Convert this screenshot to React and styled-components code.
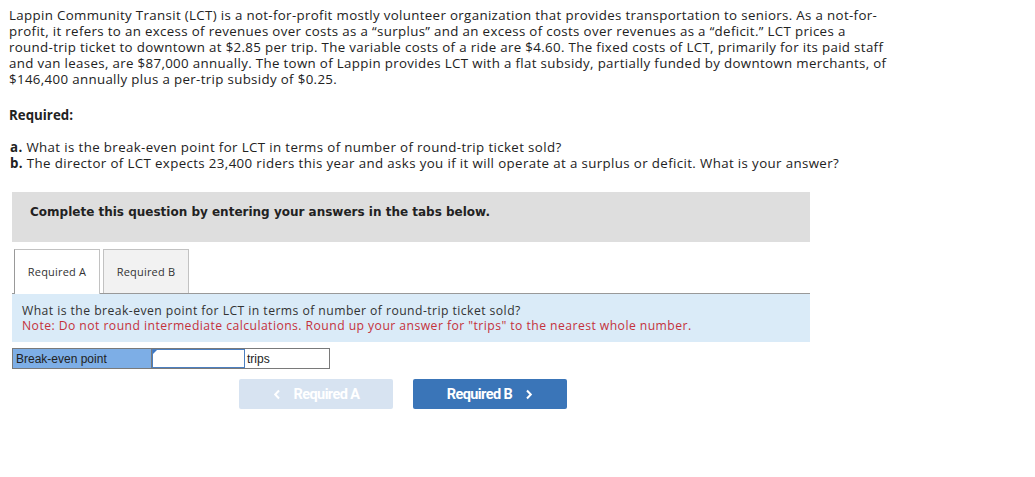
import React from "react";
import styled, { createGlobalStyle } from "styled-components";

const Global = createGlobalStyle`
  html, body { margin: 0; padding: 0; background: #fff; }
  body { font-family: "Open Sans", sans-serif; color: #222; }
`;

const Page = styled.div`
  width: 1035px;
  height: 477px;
  box-sizing: border-box;
  padding: 7px 0 0 9px;
  overflow: hidden;
`;

const Intro = styled.p`
  margin: 0;
  font-family: "Open Sans", sans-serif;
  font-size: 13.3px;
  letter-spacing: 0.34px;
  line-height: 16px;
  color: #222;
`;

const ReqHead = styled.div`
  margin-top: 20px;
  font-family: "Open Sans", sans-serif;
  font-weight: 700;
  font-size: 13.3px;
  line-height: 16px;
  color: #222;
`;

const Parts = styled.div`
  margin-top: 16px;
  padding-left: 1px;
  font-family: "Open Sans", sans-serif;
  font-size: 13.3px;
  letter-spacing: 0.37px;
  line-height: 16px;
  color: #222;
  b { font-weight: 700; }
`;

const Work = styled.div`
  margin: 21px 0 0 3px;
  width: 798px;
`;

const Banner = styled.div`
  height: 50px;
  box-sizing: border-box;
  background: #dedede;
  padding: 13px 0 0 18px;
  font-family: "DejaVu Sans", Verdana, sans-serif;
  font-weight: 700;
  font-size: 12px;
  line-height: 15px;
  color: #222;
`;

const Tabs = styled.div`
  display: flex;
  gap: 3px;
  margin-top: 7px;
  padding-left: 2px;
  height: 44px;
`;

const Tab = styled.div`
  width: 86px;
  box-sizing: border-box;
  border: 1px solid #c2c2c2;
  border-bottom: none;
  background: ${(p) => (p.$active ? "#fff" : "#f2f2f2")};
  display: flex;
  align-items: center;
  justify-content: center;
  font-family: "Open Sans", sans-serif;
  font-size: 11px;
  letter-spacing: 0.2px;
  color: #333;
  padding-bottom: 1px;
  ${(p) => p.$active && "border-left-color: #999; height: 45px; position: relative; z-index: 1;"}
`;

const Panel = styled.div`
  border-top: 1px solid #999;
  background: #daebf8;
  height: 49px;
  box-sizing: border-box;
  padding: 9px 0 0 10px;
  font-family: "Open Sans", sans-serif;
  font-size: 12.2px;
  letter-spacing: 0.44px;
  line-height: 15px;
  color: #333;
`;

const Note = styled.div`
  color: #c4323c;
`;

const Row = styled.div`
  display: flex;
  margin-top: 6px;
  height: 21px;
  width: 318px;
  box-sizing: border-box;
  border: 1px solid #7a7a7a;
  font-family: "Liberation Sans", Arial, sans-serif;
  font-size: 12px;
`;

const Label = styled.div`
  width: 139px;
  background: #7daee6;
  border-right: 1px solid #7a7a7a;
  display: flex;
  align-items: center;
  padding-left: 3px;
  box-sizing: border-box;
  color: #222;
`;

const Input = styled.div`
  width: 93px;
  box-sizing: border-box;
  border: 1px solid #4b7fc0;
  position: relative;
  background: #fff;
  &::before {
    content: "";
    position: absolute;
    left: 0;
    top: 0;
    border-top: 4px solid #3d78c5;
    border-right: 4px solid transparent;
  }
`;

const Unit = styled.div`
  flex: 1;
  display: flex;
  align-items: center;
  padding-left: 2px;
  color: #222;
`;

const Nav = styled.div`
  display: flex;
  gap: 20px;
  margin: 10px 0 0 227px;
`;

const NavBtn = styled.div`
  width: 154px;
  height: 30px;
  border-radius: 2px;
  background: ${(p) => (p.$disabled ? "#d7e3f1" : "#3a75b8")};
  color: #fff;
  display: flex;
  align-items: center;
  justify-content: center;
  gap: 13px;
  font-family: Roboto, sans-serif;
  font-weight: 700;
  font-size: 14.5px;
  letter-spacing: -0.6px;
  svg { display: block; }
`;

const Chevron = ({ dir }) => (
  <svg width="8" height="11" viewBox="0 0 8 11">
    <path
      d={dir === "left" ? "M6 1.5 L2.2 5.5 L6 9.5" : "M2 1.5 L5.8 5.5 L2 9.5"}
      fill="none"
      stroke="#fff"
      strokeWidth="2"
    />
  </svg>
);

export default function App() {
  return (
    <>
      <Global />
      <Page>
        <Intro>
          Lappin Community Transit (LCT) is a not-for-profit mostly volunteer organization that provides transportation to seniors. As a not-for-
          <br />
          profit, it refers to an excess of revenues over costs as a “surplus” and an excess of costs over revenues as a “deficit.” LCT prices a
          <br />
          round-trip ticket to downtown at $2.85 per trip. The variable costs of a ride are $4.60. The fixed costs of LCT, primarily for its paid staff
          <br />
          and van leases, are $87,000 annually. The town of Lappin provides LCT with a flat subsidy, partially funded by downtown merchants, of
          <br />
          $146,400 annually plus a per-trip subsidy of $0.25.
        </Intro>
        <ReqHead>Required:</ReqHead>
        <Parts>
          <div>
            <b>a.</b> What is the break-even point for LCT in terms of number of round-trip ticket sold?
          </div>
          <div>
            <b>b.</b> The director of LCT expects 23,400 riders this year and asks you if it will operate at a surplus or deficit. What is your answer?
          </div>
        </Parts>
        <Work>
          <Banner>Complete this question by entering your answers in the tabs below.</Banner>
          <Tabs>
            <Tab $active>Required A</Tab>
            <Tab>Required B</Tab>
          </Tabs>
          <Panel>
            <div>What is the break-even point for LCT in terms of number of round-trip ticket sold?</div>
            <Note>Note: Do not round intermediate calculations. Round up your answer for "trips" to the nearest whole number.</Note>
          </Panel>
          <Row>
            <Label>Break-even point</Label>
            <Input />
            <Unit>trips</Unit>
          </Row>
          <Nav>
            <NavBtn $disabled>
              <Chevron dir="left" />
              Required A
            </NavBtn>
            <NavBtn>
              Required B
              <Chevron dir="right" />
            </NavBtn>
          </Nav>
        </Work>
      </Page>
    </>
  );
}
